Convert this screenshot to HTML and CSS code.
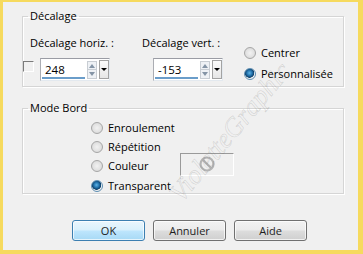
FILE: index.html
```html
<!DOCTYPE html>
<html lang="fr">
<head>
<meta charset="utf-8">
<link rel="stylesheet" href="styles.css">
</head>
<body>
<div class="frame">
  <fieldset class="group g1">
    <legend>Décalage</legend>
    <div class="g1-row">
      <div class="offset horiz">
        <div class="lbl">Décalage horiz. :</div>
        <div class="ctl-row">
          <span class="check"></span>
          <div class="spin">
            <span class="val">248</span>
            <span class="arrows"><span class="up"></span><span class="down"></span></span>
            <span class="drop"></span>
          </div>
        </div>
      </div>
      <div class="offset vert">
        <div class="lbl">Décalage vert. :</div>
        <div class="ctl-row">
          <div class="spin">
            <span class="val">-153</span>
            <span class="arrows"><span class="up"></span><span class="down"></span></span>
            <span class="drop"></span>
          </div>
        </div>
      </div>
      <div class="radios side">
        <div class="opt"><span class="radio"></span><span>Centrer</span></div>
        <div class="opt"><span class="radio on"></span><span>Personnalisée</span></div>
      </div>
    </div>
  </fieldset>
  <fieldset class="group g2">
    <legend>Mode Bord</legend>
    <div class="radios mode">
      <div class="opt"><span class="radio"></span><span>Enroulement</span></div>
      <div class="opt"><span class="radio"></span><span>Répétition</span></div>
      <div class="opt"><span class="radio"></span><span class="lbl-fixed">Couleur</span>
        <span class="swatch"><svg width="18" height="18" viewBox="0 0 18 18"><circle cx="9" cy="9" r="6.5" fill="none" stroke="#b4b4b4" stroke-width="2.2"/><line x1="4.6" y1="4.6" x2="13.4" y2="13.4" stroke="#b4b4b4" stroke-width="2.2"/></svg></span>
      </div>
      <div class="opt"><span class="radio on"></span><span>Transparent</span></div>
    </div>
  </fieldset>
  <div class="buttons">
    <button class="btn default">OK</button>
    <button class="btn">Annuler</button>
    <button class="btn">Aide</button>
  </div>
  <span class="watermark">VioletteGraphic</span>
</div>
</body>
</html>
```
FILE: styles.css
```css
* { box-sizing: border-box; }
html, body { margin: 0; padding: 0; }
body {
  width: 363px;
  height: 254px;
  background: #f6da5e;
  font-family: "Open Sans", "Noto Sans", sans-serif;
  font-size: 11px;
  color: #000;
  overflow: hidden;
}
.frame {
  position: relative;
  margin: 2px 5px 4px 3px;
  height: 248px;
  background: #f0f0f0;
  overflow: hidden;
  padding-top: 7px;
}
.group {
  margin: 0 14px 0 19px;
  border: 1px solid #d5d5d5;
  box-shadow: 1px 1px 0 #fff, inset 1px 1px 0 #fff;
  padding: 0;
  min-width: 0;
}
.group legend {
  padding: 0 2px;
  margin-left: 5px;
  line-height: 14px;
  height: 14px;
}
.g1 { height: 78px; }
.g2 { height: 93px; margin-top: 14px; }

.g1-row { display: flex; }
.offset { flex: none; }
.offset .lbl { line-height: 14px; margin-top: 13px; white-space: nowrap; }
.horiz .lbl { margin-left: 7px; }
.ctl-row { display: flex; align-items: flex-start; margin-top: 8px; }
.horiz { width: 119px; }
.vert { width: 100px; }
.vert .ctl-row { padding-left: 11px; }

.check {
  flex: none;
  width: 11px; height: 11px; margin-top: 3px; margin-right: 6px;
  border-top: 1px solid #7a7a7a; border-left: 1px solid #7a7a7a;
  border-right: 1px solid #fff; border-bottom: 1px solid #fff;
}
.spin {
  position: relative; flex: none;
  display: flex; align-items: center;
  width: 70px; height: 23px;
  background: #fff;
  border: 1px solid #abadb3;
  border-top-color: #9a9ca4;
  border-right-color: #e3e9ef;
  border-bottom-color: #e3e9ef;
  padding-left: 4px;
}
.spin .val { flex: none; width: 41px; line-height: 14px; font-size: 11.5px; }
.spin::after {
  content: ""; position: absolute; left: 1px; bottom: 1px; width: 43px; height: 2px;
  background: #6a9dca;
}
.arrows {
  flex: none;
  display: flex; flex-direction: column; width: 10px; height: 18px;
  border: 1px solid #c8cdd3; margin-left: 1px;
}
.arrows span { flex: 1; position: relative; background: #eef1f5; }
.arrows .up { border-bottom: 1px solid #c8cdd3; }
.arrows .up::after, .arrows .down::after {
  content: ""; position: absolute; left: 1px; width: 0; height: 0;
  border-left: 3px solid transparent; border-right: 3px solid transparent;
}
.arrows .up::after { top: 2px; border-bottom: 4px solid #8494a6; }
.arrows .down::after { top: 2px; border-top: 4px solid #8494a6; }
.drop {
  flex: none;
  position: relative; width: 10px; height: 19px; margin-left: 2px;
  background: linear-gradient(#fbfbfb, #e6e6e6);
  border: 1px solid #a3a3a3;
}
.drop::after {
  content: ""; position: absolute; left: 1px; top: 7px;
  border-left: 3px solid transparent; border-right: 3px solid transparent;
  border-top: 3px solid #000;
}

.radios .opt { display: flex; align-items: center; line-height: 14px; white-space: nowrap; }
.radio {
  width: 12px; height: 12px; border-radius: 50%; flex: none;
  border: 1px solid #a6a6a6;
  background: radial-gradient(circle at 50% 50%, #f2f2f2 0, #e2e2e2 55%, #d2d2d2 100%);
  margin-right: 5px;
}
.radio.on {
  border-color: #5f8fb3;
  background: radial-gradient(circle at 45% 40%, #5fb4e6 0, #1f6ea8 35%, #0d3e66 55%, #f4f4f4 62%, #e3e3e3 100%);
}
.side { flex: none; margin-left: 2px; margin-top: 20px; }
.side .opt { height: 20px; }
.side .opt + .opt { margin-top: 1px; }

.mode { margin-left: 68px; margin-top: 3px; }
.mode .opt { height: 19.4px; }
.lbl-fixed { width: 72px; }
.swatch {
  display: flex; align-items: center; justify-content: center; flex: none;
  width: 54px; height: 23px; margin-bottom: 4px;
  border-top: 1px solid #9a9a9a; border-left: 1px solid #9a9a9a;
  border-right: 1px solid #fff; border-bottom: 1px solid #fff;
}

.buttons { display: flex; gap: 8px; margin-top: 26px; padding-left: 69px; }
.btn {
  width: 73px; height: 21px; padding: 0;
  font-family: inherit; font-size: 11px; color: #1e1e1e;
  border: 1px solid #707070; border-radius: 3px;
  background: linear-gradient(#f2f2f2 0, #ebebeb 48%, #dddddd 52%, #cfcfcf 100%);
  box-shadow: inset 0 0 0 1px rgba(255,255,255,0.7);
}
.btn.default {
  border-color: #3c7fb1;
  background: linear-gradient(#eaf6fd 0, #d9f0fc 48%, #bee6fd 52%, #a7d9f5 100%);
}
.watermark {
  position: absolute; left: 160px; top: 186px;
  font-family: "Liberation Serif", serif; font-style: italic; font-size: 27px;
  color: transparent; -webkit-text-stroke: 0.5px rgba(110,110,110,0.28);
  transform: rotate(-50deg); transform-origin: 0 0;
  white-space: nowrap; pointer-events: none;
}
```
